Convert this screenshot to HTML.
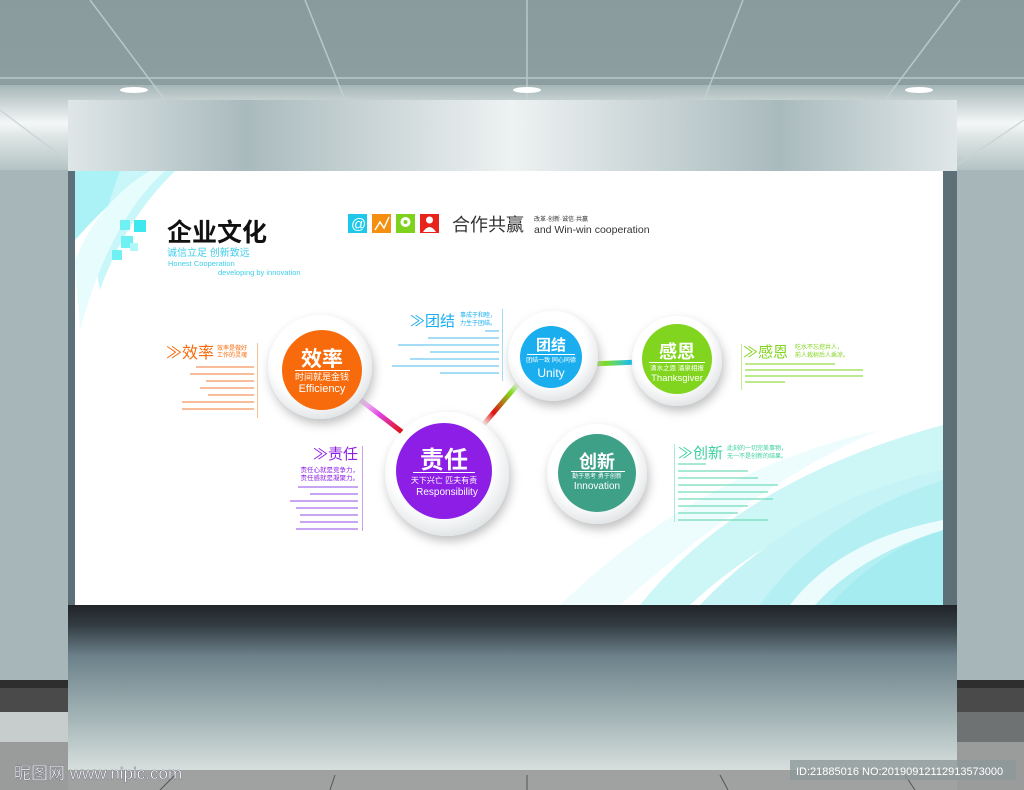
<!DOCTYPE html>
<html><head><meta charset="utf-8"><style>
html,body{margin:0;padding:0;background:#9fb0b2;}
svg{display:block;font-family:"Liberation Sans","Noto Sans CJK SC",sans-serif;}
</style></head><body>
<svg width="1024" height="790" viewBox="0 0 1024 790" xmlns="http://www.w3.org/2000/svg">
<defs>
<linearGradient id="ceil" x1="0" y1="0" x2="0" y2="1">
<stop offset="0" stop-color="#899b9c"/><stop offset="1" stop-color="#a6b6b7"/></linearGradient>
<linearGradient id="glow" x1="0" y1="0" x2="0" y2="1">
<stop offset="0" stop-color="#a6b6b7"/><stop offset="0.45" stop-color="#f4f7f7"/><stop offset="0.6" stop-color="#dfe6e6"/><stop offset="1" stop-color="#b5c3c4"/></linearGradient>
<linearGradient id="top" x1="0" y1="0" x2="1" y2="0">
<stop offset="0" stop-color="#dfe6e7"/><stop offset="0.2" stop-color="#a9babd"/><stop offset="0.5" stop-color="#eef2f2"/><stop offset="0.8" stop-color="#a9babd"/><stop offset="1" stop-color="#e0e7e8"/></linearGradient>
<linearGradient id="under" x1="0" y1="0" x2="0" y2="1">
<stop offset="0" stop-color="#202428"/><stop offset="0.12" stop-color="#333c43"/><stop offset="0.3" stop-color="#6c818a"/><stop offset="0.65" stop-color="#a2b3b5"/><stop offset="1" stop-color="#dce3e1"/></linearGradient>
<linearGradient id="c1" x1="0" y1="0" x2="1" y2="1"><stop offset="0" stop-color="#fff"/><stop offset=".5" stop-color="#e040e0"/><stop offset="1" stop-color="#e01010"/></linearGradient>
<linearGradient id="c2" x1="0" y1="1" x2="1" y2="0"><stop offset="0" stop-color="#fff"/><stop offset=".3" stop-color="#e01010"/><stop offset=".8" stop-color="#80e020"/><stop offset="1" stop-color="#fff"/></linearGradient>
<linearGradient id="c3" x1="0" y1="0" x2="1" y2="0"><stop offset="0" stop-color="#fff"/><stop offset=".3" stop-color="#80e020"/><stop offset=".8" stop-color="#20c0f0"/><stop offset="1" stop-color="#fff"/></linearGradient>
<linearGradient id="c4" x1="0" y1="0" x2="1" y2="0"><stop offset="0" stop-color="#fff"/><stop offset=".5" stop-color="#e01010"/><stop offset="1" stop-color="#40b090"/></linearGradient>
<radialGradient id="ring" cx=".45" cy=".4" r=".6"><stop offset=".7" stop-color="#fff"/><stop offset="1" stop-color="#e3e6e8"/></radialGradient>
<filter id="sh" x="-30%" y="-30%" width="160%" height="170%"><feDropShadow dx="2" dy="5" stdDeviation="5" flood-color="#000" flood-opacity=".25"/></filter>
<filter id="bl"><feGaussianBlur stdDeviation="6"/></filter>
</defs>
<rect width="1024" height="790" fill="url(#ceil)"/>
<rect x="0" y="85" width="1024" height="85" fill="url(#glow)"/>
<g stroke="#c5d3d4" stroke-width="1.5" opacity=".8">
<line x1="90" y1="0" x2="240" y2="200"/><line x1="305" y1="0" x2="385" y2="200"/><line x1="527" y1="0" x2="527" y2="200"/><line x1="743" y1="0" x2="665" y2="200"/><line x1="960" y1="0" x2="810" y2="200"/>
<line x1="0" y1="78" x2="1024" y2="78"/><line x1="0" y1="110" x2="80" y2="170"/><line x1="1024" y1="120" x2="950" y2="170"/></g>
<ellipse cx="134" cy="90" rx="14" ry="3" fill="#fff"/><ellipse cx="527" cy="90" rx="14" ry="3" fill="#fff"/><ellipse cx="919" cy="90" rx="14" ry="3" fill="#fff"/>
<rect x="0" y="170" width="1024" height="510" fill="#a7b6b8"/>
<rect x="0" y="680" width="1024" height="8" fill="#2e2e2e"/>
<rect x="0" y="688" width="1024" height="24" fill="#4a4a4a"/>
<rect x="0" y="712" width="1024" height="78" fill="#9a9c9c"/>
<rect x="0" y="712" width="68" height="30" fill="#c7cccc"/><rect x="957" y="712" width="67" height="30" fill="#6e7273"/>
<!-- panel -->
<rect x="68" y="100" width="889" height="675" fill="#5d6f77"/>
<rect x="68" y="100" width="889" height="71" fill="url(#top)"/>
<rect x="68" y="605" width="889" height="170" fill="url(#under)"/>
<rect x="68" y="770" width="889" height="20" fill="#a0a2a2"/>
<g stroke="#555" stroke-width="1"><line x1="160" y1="790" x2="175" y2="775"/><line x1="330" y1="790" x2="335" y2="775"/><line x1="527" y1="790" x2="527" y2="775"/><line x1="720" y1="775" x2="728" y2="790"/><line x1="905" y1="775" x2="915" y2="790"/></g>
<!-- poster -->
<rect x="75" y="171" width="868" height="434" fill="#fff"/>
<g opacity=".75">
<path d="M75 171 L150 171 Q110 200 75 240Z" fill="#8eeef2"/>
<path d="M120 171 L175 171 Q125 220 100 290 Q90 250 120 171Z" fill="#b8f5f7"/>
<path d="M75 260 Q100 200 150 171 L165 171 Q110 220 80 330Z" fill="#dffbfb"/>
<path d="M640 605 Q740 480 943 425 L943 470 Q780 520 690 605Z" fill="#bdf3f5"/>
<path d="M560 605 Q700 470 880 430 Q760 480 620 605Z" fill="#e8fbfc"/>
<path d="M700 605 Q800 500 943 470 L943 605Z" fill="#b4f0f3"/>
<path d="M760 605 Q820 520 943 480 L943 605Z" fill="#9beaef"/>
<path d="M830 605 Q880 550 943 530 L943 605Z" fill="#86e6ec"/>
<path d="M790 605 Q840 540 943 520 L943 530 Q860 555 815 605Z" fill="#e6fcfc"/>
</g>
<g fill="#6ff0f3"><rect x="120" y="220" width="10" height="10"/><rect x="134" y="220" width="12" height="12" fill="#3ee8ec"/><rect x="121" y="236" width="12" height="12"/><rect x="112" y="250" width="10" height="10"/><rect x="130" y="243" width="8" height="8" fill="#b0f7f8"/></g>
<text x="167" y="241" font-size="25" font-weight="bold" fill="#111">企业文化</text>
<text x="167" y="256" font-size="10" fill="#3fcfe8">诚信立足 创新致远</text>
<text x="168" y="266" font-size="7.5" fill="#3fcfe8">Honest Cooperation</text>
<text x="218" y="275" font-size="7.5" fill="#3fcfe8">developing by innovation</text>
<rect x="348" y="214" width="19" height="19" fill="#1fc8e8"/><text x="351" y="229" font-size="15" fill="#fff">@</text>
<rect x="372" y="214" width="19" height="19" fill="#f58f10"/><path d="M375 230 L380 222 L384 228 L389 217" stroke="#fff" fill="none" stroke-width="1.5"/>
<rect x="396" y="214" width="19" height="19" fill="#7fd21c"/><circle cx="405.5" cy="222" r="5" fill="#fff"/><circle cx="405.5" cy="222" r="2" fill="#7fd21c"/>
<rect x="420" y="214" width="19" height="19" fill="#e8231c"/><circle cx="429.5" cy="220" r="3.5" fill="#fff"/><path d="M423 232 Q429.5 222 436 232Z" fill="#fff"/>
<text x="452" y="231" font-size="18" fill="#333">合作共赢</text>
<text x="534" y="221" font-size="6" fill="#333">改革·创新·诚信·共赢</text>
<text x="534" y="233" font-size="10.5" fill="#333">and Win-win  cooperation</text>
<line x1="358" y1="398" x2="402" y2="432" stroke="url(#c1)" stroke-width="5"/>
<line x1="483" y1="425" x2="518" y2="384" stroke="url(#c2)" stroke-width="5"/>
<line x1="590" y1="364" x2="640" y2="362" stroke="url(#c3)" stroke-width="5"/>
<line x1="505" y1="473" x2="552" y2="473" stroke="url(#c4)" stroke-width="6"/>
<g filter="url(#sh)">
<circle cx="320" cy="367" r="52" fill="url(#ring)"/>
<circle cx="553" cy="356" r="45" fill="url(#ring)"/>
<circle cx="677" cy="361" r="45" fill="url(#ring)"/>
<circle cx="447" cy="474" r="62" fill="url(#ring)"/>
<circle cx="597" cy="474" r="50" fill="url(#ring)"/>
</g>
<circle cx="322" cy="370" r="40" fill="#f76b0c"/>
<circle cx="551" cy="357" r="31" fill="#1aaeef"/>
<circle cx="677" cy="359" r="35" fill="#82d51e"/>
<circle cx="444" cy="471" r="48" fill="#8c1ee6"/>
<circle cx="597" cy="473" r="39" fill="#3fa088"/>
<g fill="#fff" text-anchor="middle">
<text x="322" y="366" font-size="21" font-weight="bold">效率</text>
<rect x="295" y="370" width="55" height="1" />
<text x="322" y="380" font-size="9">时间就是金钱</text>
<text x="322" y="392" font-size="11">Efficiency</text>
<text x="551" y="350" font-size="15" font-weight="bold">团结</text>
<rect x="527" y="354" width="48" height="1"/>
<text x="551" y="362" font-size="6">团结一致 同心同德</text>
<text x="551" y="377" font-size="12">Unity</text>
<text x="677" y="358" font-size="18" font-weight="bold">感恩</text>
<rect x="649" y="362" width="56" height="1"/>
<text x="677" y="370" font-size="6.5">滴水之恩 涌泉相报</text>
<text x="677" y="381" font-size="9.5">Thanksgiver</text>
<text x="444" y="468" font-size="24" font-weight="bold">责任</text>
<rect x="413" y="472" width="62" height="1"/>
<text x="444" y="483" font-size="8">天下兴亡 匹夫有责</text>
<text x="447" y="495" font-size="10">Responsibility</text>
<text x="597" y="468" font-size="18" font-weight="bold">创新</text>
<rect x="571" y="471" width="54" height="1"/>
<text x="597" y="478" font-size="6">勤于思考 勇于创新</text>
<text x="597" y="489" font-size="10">Innovation</text>
</g>
<text x="166" y="358" font-size="16" fill="#f76b0c">≫效率</text>
<text x="217" y="350" font-size="6" fill="#f76b0c">效率是做好</text><text x="217" y="357" font-size="6" fill="#f76b0c">工作的灵魂</text>
<rect x="257" y="343" width="1" height="75" fill="#f9c090"/>
<g fill="#f7a070" opacity=".7"><rect x="196" y="366" width="58" height="2"/><rect x="190" y="373" width="64" height="2"/><rect x="206" y="380" width="48" height="2"/><rect x="200" y="387" width="54" height="2"/><rect x="208" y="394" width="46" height="2"/><rect x="182" y="401" width="72" height="2"/><rect x="182" y="408" width="72" height="2"/></g>
<text x="410" y="326" font-size="15" fill="#1aaeef">≫团结</text>
<text x="460" y="317" font-size="6" fill="#1aaeef">事成于和睦，</text><text x="460" y="325" font-size="6" fill="#1aaeef">力生于团结。</text>
<rect x="502" y="309" width="1" height="72" fill="#a0dcf7"/>
<g fill="#80cff3" opacity=".7"><rect x="485" y="330" width="14" height="2"/><rect x="428" y="337" width="71" height="2"/><rect x="398" y="344" width="101" height="2"/><rect x="430" y="351" width="69" height="2"/><rect x="410" y="358" width="89" height="2"/><rect x="392" y="365" width="107" height="2"/><rect x="440" y="372" width="59" height="2"/></g>
<text x="743" y="357" font-size="15" fill="#82d51e">≫感恩</text>
<text x="795" y="349" font-size="6" fill="#82d51e">吃水不忘挖井人，</text><text x="795" y="357" font-size="6" fill="#82d51e">前人栽树后人乘凉。</text>
<rect x="741" y="344" width="1" height="46" fill="#c5ec9a"/>
<g fill="#a5e060" opacity=".7"><rect x="745" y="363" width="90" height="2"/><rect x="745" y="369" width="118" height="2"/><rect x="745" y="375" width="118" height="2"/><rect x="745" y="381" width="40" height="2"/></g>
<text x="678" y="458" font-size="15" fill="#3cd0a0">≫创新</text>
<text x="727" y="450" font-size="6" fill="#3cd0a0">此刻的一切完美事物，</text><text x="727" y="458" font-size="6" fill="#3cd0a0">无一不是创新的结果。</text>
<rect x="674" y="444" width="1" height="78" fill="#a8ecd8"/>
<g fill="#70dcb8" opacity=".6"><rect x="678" y="463" width="28" height="2"/><rect x="678" y="470" width="70" height="2"/><rect x="678" y="477" width="80" height="2"/><rect x="678" y="484" width="100" height="2"/><rect x="678" y="491" width="90" height="2"/><rect x="678" y="498" width="95" height="2"/><rect x="678" y="505" width="70" height="2"/><rect x="678" y="512" width="60" height="2"/><rect x="678" y="519" width="90" height="2"/></g>
<text x="313" y="459" font-size="15" fill="#8c1ee6">≫责任</text>
<rect x="362" y="446" width="1" height="85" fill="#c9a0f0"/>
<text x="359" y="472" font-size="6.5" fill="#8c1ee6" text-anchor="end">责任心就是竞争力，</text>
<text x="359" y="480" font-size="6.5" fill="#8c1ee6" text-anchor="end">责任感就是凝聚力。</text>
<g fill="#b080ee" opacity=".7"><rect x="298" y="486" width="60" height="2"/><rect x="310" y="493" width="48" height="2"/><rect x="290" y="500" width="68" height="2"/><rect x="296" y="507" width="62" height="2"/><rect x="300" y="514" width="58" height="2"/><rect x="300" y="521" width="58" height="2"/><rect x="296" y="528" width="62" height="2"/></g>
<text x="14" y="779" font-size="17" fill="#fff" stroke="#667" stroke-width=".4">昵图网 www.nipic.com</text>
<rect x="790" y="760" width="226" height="20" fill="#8d9899" opacity=".8"/>
<text x="796" y="775" font-size="11" fill="#fff">ID:21885016 NO:20190912112913573000</text>
</svg>
</body></html>
